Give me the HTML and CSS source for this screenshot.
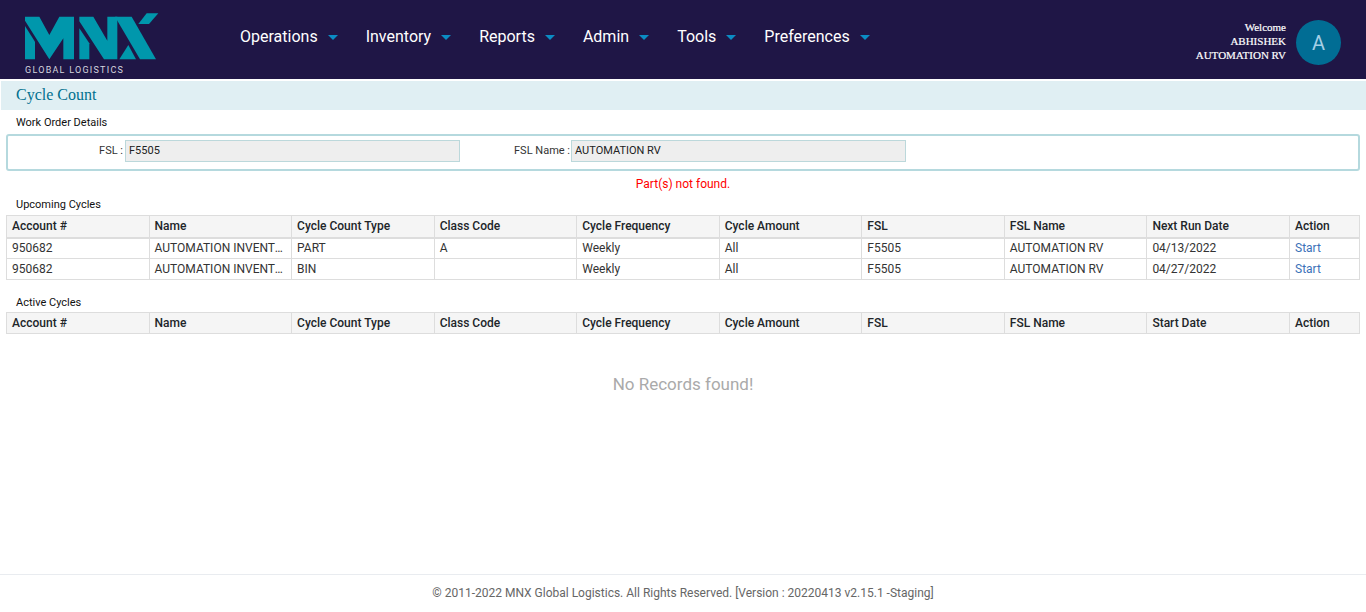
FILE: index.html
```html
<!DOCTYPE html>
<html lang="en">
<head>
<meta charset="utf-8">
<title>Cycle Count</title>
<link rel="stylesheet" href="styles.css">
</head>
<body>
<header class="topbar">
  <div class="brand">
    <svg class="logo" width="134" height="47" viewBox="75 39 402 141">
      <path class="logo-mark" d="M75 78L105 125V178H75Z"/>
      <path class="logo-mark" d="M75 50H118L148 105L178 50H222V178H190V115L148 178L75 62Z"/>
      <path class="logo-mark" d="M238 85L268 130V178H238Z"/>
      <path class="logo-mark" d="M238 50H280L322 122V50H352L352 178H312L238 64Z"/>
      <path class="logo-mark" d="M345 50H395L468 178H420Z"/>
      <path class="logo-mark" d="M415 72L440 40H475L447 72Z"/>
      <path class="logo-mark" d="M358 178L385 135L408 178Z"/>
    </svg>
    <span class="logo-text">GLOBAL LOGISTICS</span>
  </div>
  <nav class="nav">
    <a class="nav-item">Operations<i class="caret"></i></a>
    <a class="nav-item">Inventory<i class="caret"></i></a>
    <a class="nav-item">Reports<i class="caret"></i></a>
    <a class="nav-item">Admin<i class="caret"></i></a>
    <a class="nav-item">Tools<i class="caret"></i></a>
    <a class="nav-item">Preferences<i class="caret"></i></a>
  </nav>
  <div class="user">
    <div class="user-text">Welcome<br>ABHISHEK<br>AUTOMATION RV</div>
    <div class="avatar">A</div>
  </div>
</header>
<main class="main">
  <h1 class="page-title">Cycle Count</h1>
  <h2 class="section-title first">Work Order Details</h2>
  <section class="details">
    <label class="field-label fsl">FSL :</label>
    <div class="field-value fsl-value">F5505</div>
    <label class="field-label fsl-name">FSL Name :</label>
    <div class="field-value name-value">AUTOMATION RV</div>
  </section>
  <p class="error">Part(s) not found.</p>
  <h2 class="section-title upcoming">Upcoming Cycles</h2>
  <table class="grid">
    <thead>
      <tr><th>Account #</th><th>Name</th><th>Cycle Count Type</th><th>Class Code</th><th>Cycle Frequency</th><th>Cycle Amount</th><th>FSL</th><th>FSL Name</th><th>Next Run Date</th><th class="action-col">Action</th></tr>
    </thead>
    <tbody>
      <tr><td>950682</td><td>AUTOMATION INVENTORY</td><td>PART</td><td>A</td><td>Weekly</td><td>All</td><td>F5505</td><td>AUTOMATION RV</td><td>04/13/2022</td><td><a class="link">Start</a></td></tr>
      <tr><td>950682</td><td>AUTOMATION INVENTORY</td><td>BIN</td><td></td><td>Weekly</td><td>All</td><td>F5505</td><td>AUTOMATION RV</td><td>04/27/2022</td><td><a class="link">Start</a></td></tr>
    </tbody>
  </table>
  <h2 class="section-title active">Active Cycles</h2>
  <table class="grid grid-empty">
    <thead>
      <tr><th>Account #</th><th>Name</th><th>Cycle Count Type</th><th>Class Code</th><th>Cycle Frequency</th><th>Cycle Amount</th><th>FSL</th><th>FSL Name</th><th>Start Date</th><th class="action-col">Action</th></tr>
    </thead>
  </table>
  <p class="empty">No Records found!</p>
</main>
<footer class="footer">© 2011-2022 MNX Global Logistics. All Rights Reserved. [Version : 20220413 v2.15.1 -Staging]</footer>
</body>
</html>
```
FILE: styles.css
```css
* { box-sizing: border-box; }
html, body { height: 100%; }
body {
  margin: 0;
  font-family: Roboto, "Liberation Sans", sans-serif;
  font-size: 12px;
  color: #212529;
  background: #fff;
  display: flex;
  flex-direction: column;
  overflow: hidden;
}
.topbar {
  height: 79px;
  background: #1f1646;
  display: flex;
  align-items: flex-start;
  flex: none;
}
.brand {
  width: 240px;
  padding: 13px 0 0 25px;
  flex: none;
  display: flex;
  flex-direction: column;
}
.logo { display: block; }
.logo-mark { fill: #0097ac; }
.logo-text {
  margin-top: 5px;
  font-size: 9px;
  line-height: 10px;
  letter-spacing: 1.25px;
  color: #d5d5de;
  white-space: nowrap;
}
.nav { display: flex; gap: 28px; padding-top: 27px; }
.nav-item {
  color: #fff;
  font-size: 16px;
  line-height: 20px;
  display: flex;
  align-items: center;
}
.caret {
  width: 0;
  height: 0;
  margin: 0 0 0 10px;
  border-left: 5px solid transparent;
  border-right: 5px solid transparent;
  border-top: 5px solid #0b8cc4;
}
.user {
  margin-left: auto;
  padding: 20px 25px 0 0;
  display: flex;
  gap: 10px;
}
.user-text {
  color: #fff;
  font-family: "Liberation Serif", serif;
  font-size: 11px;
  line-height: 14px;
  text-align: right;
  -webkit-text-stroke: 0.2px #fff;
}
.avatar {
  width: 45px;
  height: 45px;
  border-radius: 50%;
  background: #016d94;
  color: #a4cfe6;
  font-size: 20px;
  display: flex;
  align-items: center;
  justify-content: center;
}
.main { flex: 1; padding: 0; }
.page-title {
  margin: 2px 0 0 1px;
  height: 29px;
  padding: 0 0 0 15px;
  background: #e0eff3;
  color: #01708e;
  font-family: "Liberation Serif", serif;
  font-size: 16px;
  font-weight: 400;
  line-height: 27px;
}
.section-title {
  margin: 0;
  padding-left: 16px;
  font-size: 11px;
  font-weight: 400;
  line-height: 14px;
  color: #111;
}
.section-title.first { padding-top: 6px; }
.details {
  margin: 4px 6px 0;
  height: 37px;
  border: 2px solid #b5d9de;
  border-radius: 3px;
  display: flex;
  align-items: flex-start;
  padding-top: 4px;
}
.field-label {
  font-size: 11px;
  line-height: 21px;
  color: #333;
  text-align: right;
}
.fsl { width: 115px; }
.fsl-name { width: 110px; }
.field-value {
  height: 22px;
  margin-left: 2px;
  background: #eee;
  border: 1px solid #bcd8db;
  padding-left: 3px;
  font-size: 11px;
  line-height: 19px;
  color: #222;
}
.fsl-value { width: 335px; }
.name-value { width: 335px; margin-left: 1px; }
.error {
  margin: 5px 0 0;
  text-align: center;
  color: #f00;
  font-size: 12px;
  line-height: 16px;
}
.section-title.upcoming { padding-top: 6px; }
.grid {
  margin: 3px 6px 0;
  width: 1354px;
  table-layout: fixed;
  border-collapse: collapse;
  font-size: 12px;
}
.grid th, .grid td {
  border: 1px solid #ddd;
  padding: 0 5px;
  overflow: hidden;
  white-space: nowrap;
  text-overflow: ellipsis;
  text-align: left;
}
.grid th {
  height: 22px;
  background: #f5f5f5;
  font-weight: 500;
  color: #212529;
  border-bottom-width: 2px;
}
.grid th.action-col { width: 70px; }
.grid.grid-empty { margin-top: 2px; }
.grid-empty th { border-bottom-width: 1px; height: 21px; }
.grid td { height: 21px; color: #333; }
.link { color: #3b71b8; }
.section-title.active { padding-top: 16px; }
.empty {
  margin: 40px 0 0;
  text-align: center;
  color: #aaa;
  font-size: 17px;
  line-height: 20px;
}
.footer {
  flex: none;
  height: 38px;
  border-top: 1px solid #e9ecf0;
  text-align: center;
  color: #666;
  font-size: 12px;
  line-height: 37px;
}
```
